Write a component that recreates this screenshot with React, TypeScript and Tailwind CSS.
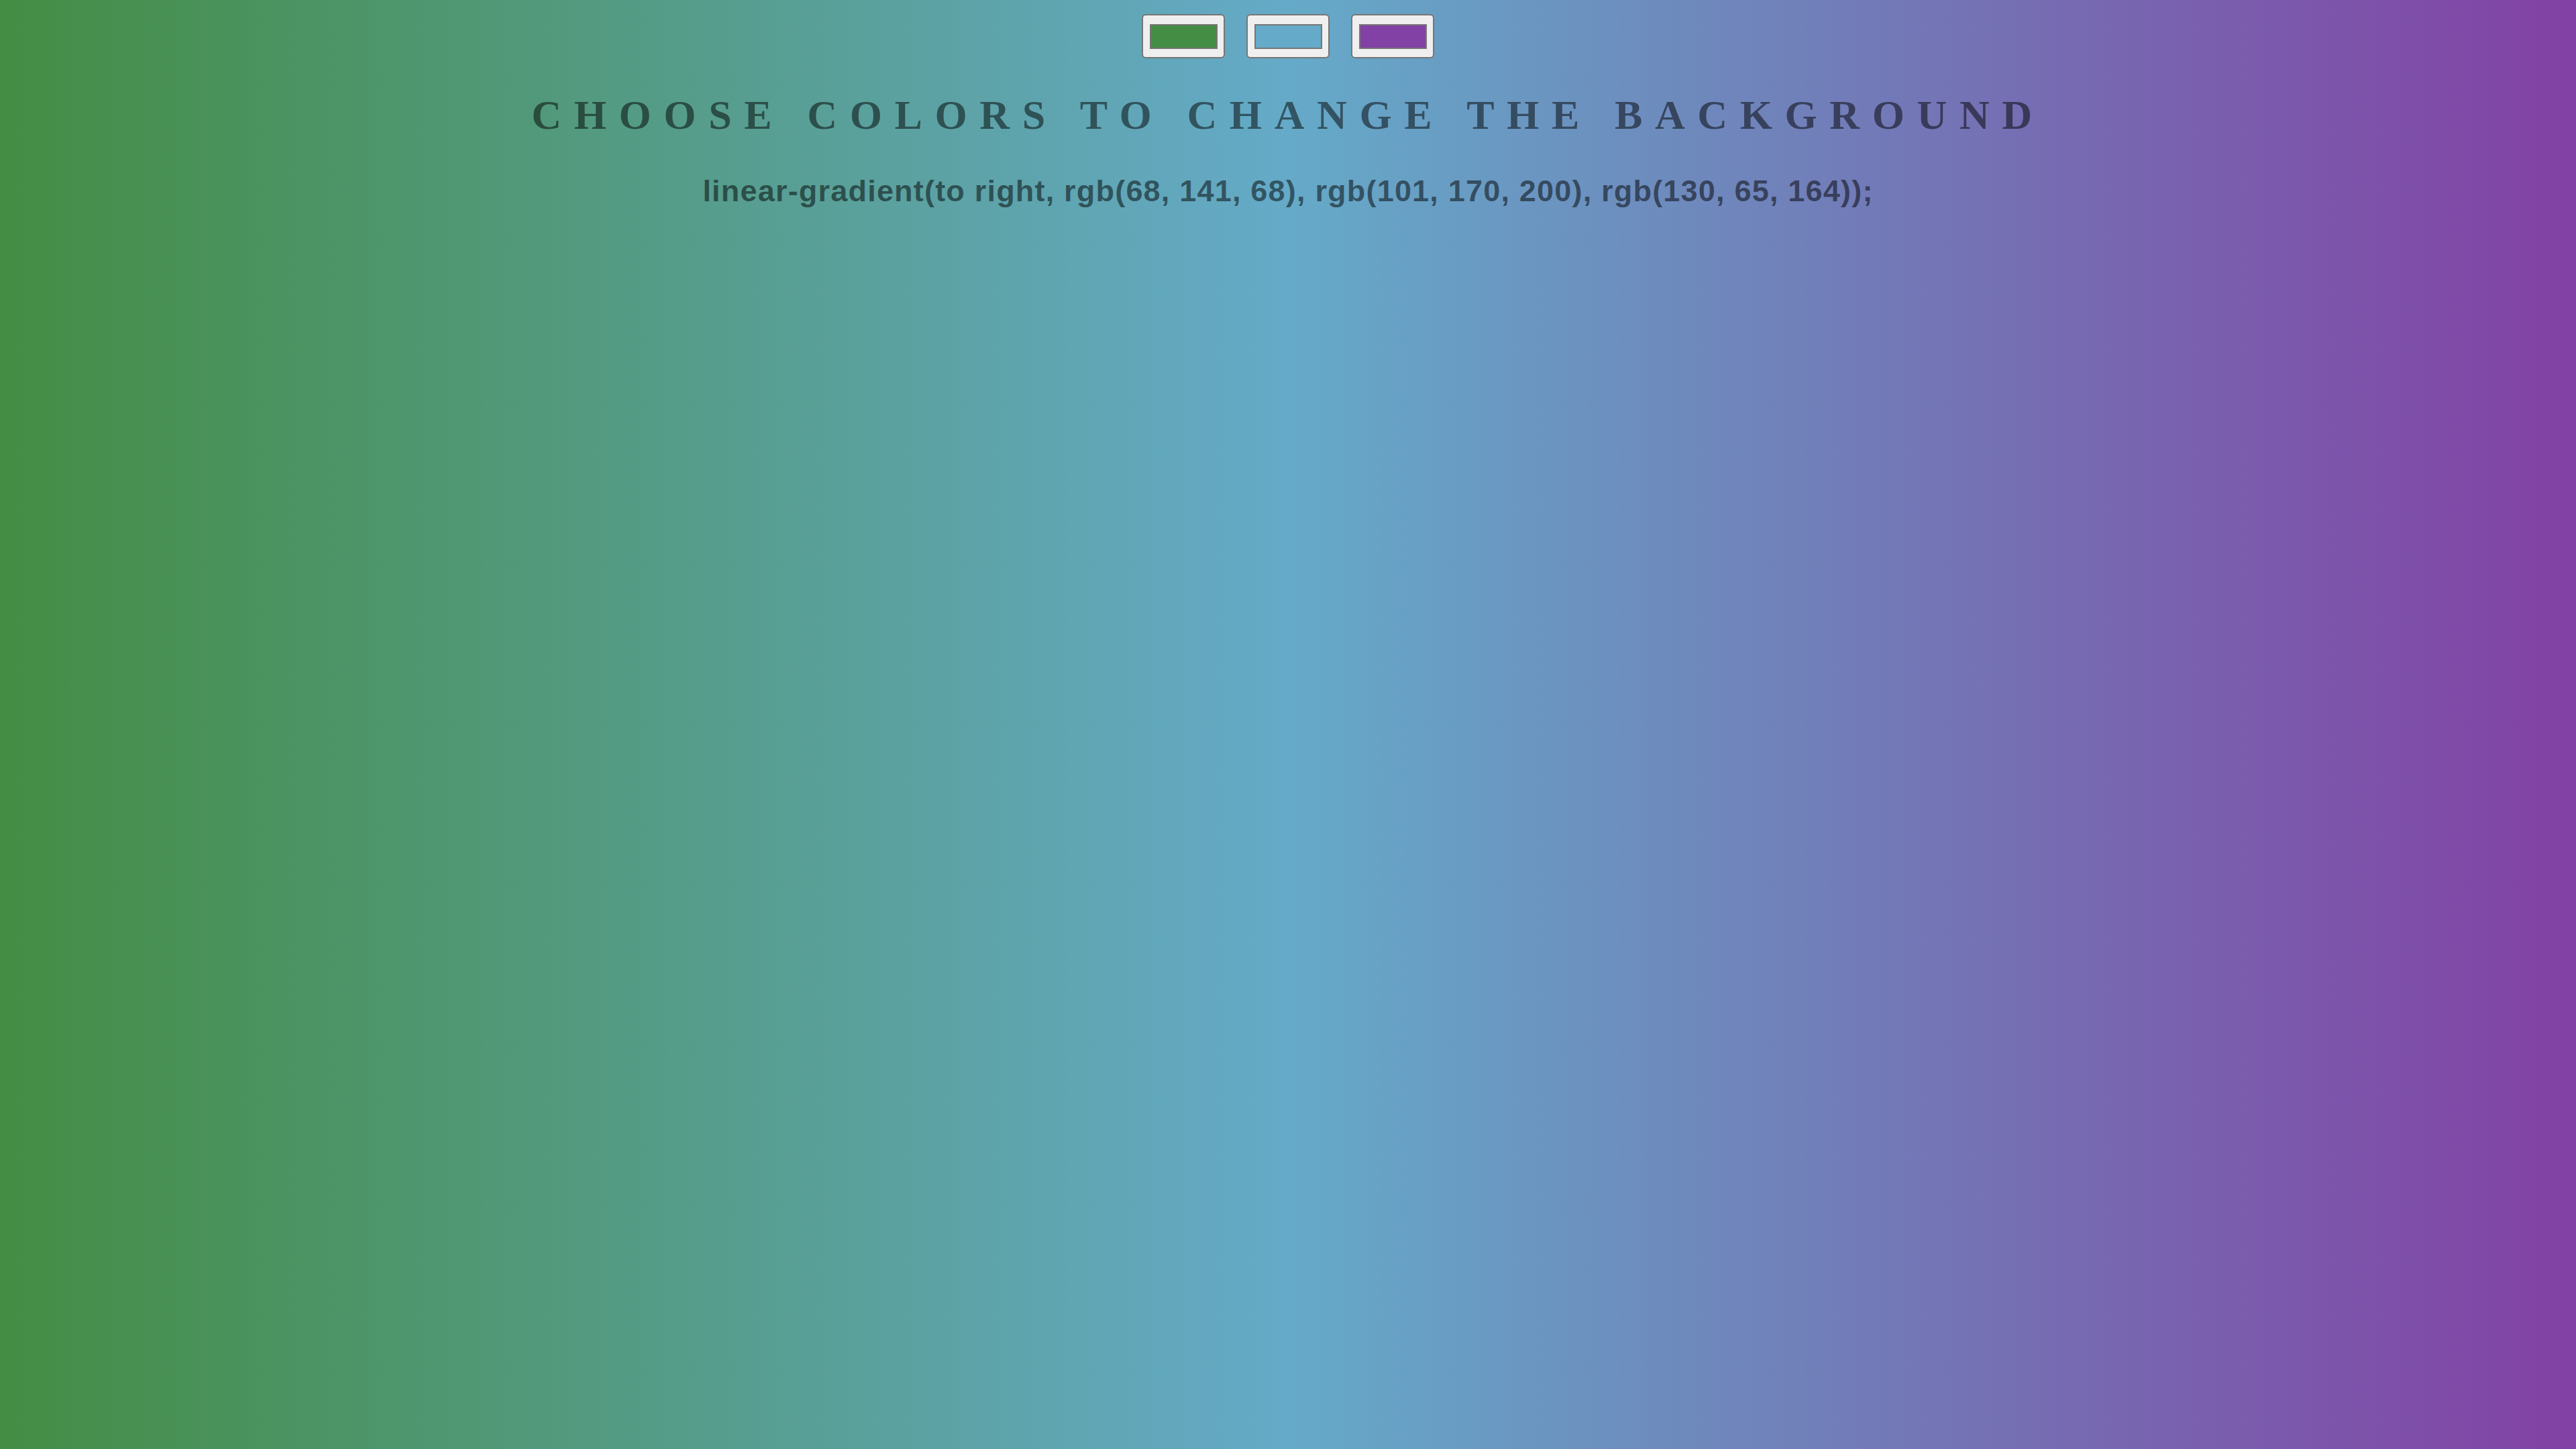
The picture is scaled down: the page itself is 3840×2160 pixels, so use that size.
import React, { useState } from "react";

function Swatch({ color, onChange }: { color: string; onChange: (c: string) => void }) {
  return (
    <label className="relative flex h-[66px] w-[124px] cursor-pointer items-center justify-center rounded-[6px] border-2 border-[#767676] bg-[#efefef]">
      <span className="block h-[37px] w-[101px] border-2 border-[#767676]" style={{ backgroundColor: color }} />
      <input
        type="color"
        value={color}
        onChange={(e) => onChange(e.target.value)}
        className="absolute inset-0 h-full w-full cursor-pointer opacity-0"
      />
    </label>
  );
}

function hexToRgb(hex: string) {
  const n = parseInt(hex.slice(1), 16);
  return `rgb(${(n >> 16) & 255}, ${(n >> 8) & 255}, ${n & 255})`;
}

export default function App() {
  const [c1, setC1] = useState("#448d44");
  const [c2, setC2] = useState("#65aac8");
  const [c3, setC3] = useState("#8241a4");
  const gradient = `linear-gradient(to right, ${hexToRgb(c1)}, ${hexToRgb(c2)}, ${hexToRgb(c3)})`;

  return (
    <div className="flex min-h-screen flex-col items-center pt-[21px]" style={{ background: gradient }}>
      <div className="flex gap-[32px]">
        <Swatch color={c1} onChange={setC1} />
        <Swatch color={c2} onChange={setC2} />
        <Swatch color={c3} onChange={setC3} />
      </div>
      <h3 className="mt-[53px] text-center font-['Liberation_Serif',serif] text-[62px] font-bold leading-[62px] tracking-[0.3em] text-black/50">
        CHOOSE COLORS TO CHANGE THE BACKGROUND
      </h3>
      <h3 className="mt-[60px] text-center font-['Liberation_Sans',Arial,sans-serif] text-[45px] font-bold leading-[45px] tracking-[1.2px] text-black/50">
        {gradient};
      </h3>
    </div>
  );
}
